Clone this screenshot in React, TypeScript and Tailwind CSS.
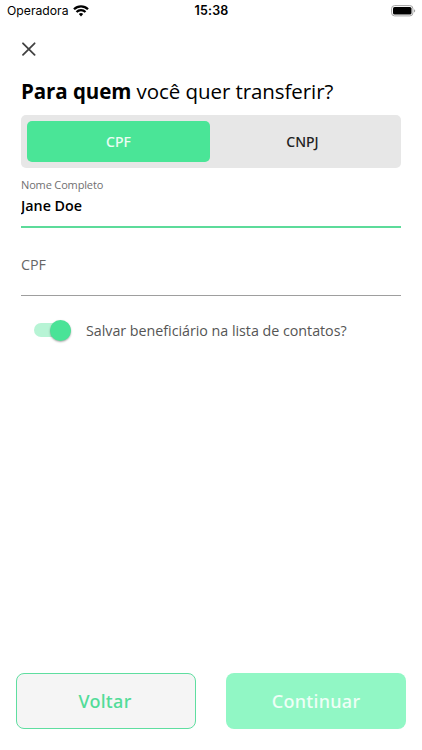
import React, { useState } from "react";

const WifiIcon = () => (
  <svg width="16" height="12" viewBox="0 0 16 12" fill="none" stroke="#000" strokeWidth="2.3">
    <path d="M1 4.3a10 10 0 0 1 14 0" />
    <path d="M3.5 7a6.4 6.4 0 0 1 9 0" />
    <path d="M8 11.4 5.8 9.1a3.1 3.1 0 0 1 4.4 0Z" fill="#000" stroke="none" />
  </svg>
);

const BatteryIcon = () => (
  <svg width="25" height="12" viewBox="0 0 25 12">
    <rect x="0.6" y="0.6" width="21.3" height="10.3" rx="3" fill="#fff" stroke="#a3a3a3" strokeWidth="1" />
    <rect x="2" y="2" width="18.5" height="7.5" rx="1.6" fill="#000" />
    <path d="M23.2 4.2v3.2c.7-.3 1-.9 1-1.6s-.3-1.3-1-1.6Z" fill="#8a8a8a" />
  </svg>
);

export default function TransferForm() {

  // 'cpf' | 'cnpj'
  const [docType, setDocType] = useState("cpf");

  const [name, setName] = useState("Jane Doe");
  const [doc, setDoc] = useState("");
  const [save, setSave] = useState(true);

  const tabClass = (active: boolean) =>
    active ? "rounded-[5px] bg-[#4ae597] text-white/90" : "rounded-[5px] text-[#222222]";

  return (
    <div className="flex h-[750px] w-[422px] flex-col bg-white font-['Open_Sans','Noto_Sans',sans-serif]">

      {/* status bar */}
      <div className="grid h-[22px] grid-cols-3 items-center pl-[7px] pr-[6px] font-['Inter',sans-serif] text-black">
        <div className="flex items-center gap-[4px] text-[12.2px] leading-[22px]">
          <span>Operadora</span>
          <WifiIcon />
        </div>
        <span className="text-center text-[12.5px] font-semibold leading-[22px] tracking-[0.2px]">15:38</span>
        <div className="flex justify-end">
          <BatteryIcon />
        </div>
      </div>

      <div className="px-[21px]">
        <button aria-label="Fechar" className="mt-[20px] block h-[14px] w-[15px]">
          <svg width="15" height="14" viewBox="0 0 15 14" fill="none" stroke="#424242" strokeWidth="1.8" strokeLinecap="round">
            <path d="M2 1.3 13.6 12.8M13.6 1.3 2 12.8" />
          </svg>
        </button>

        <h1 className="mt-[21px] whitespace-nowrap text-[20.5px] leading-[28px] tracking-[-0.07px] text-black">
          <b className="font-bold">Para quem</b> você quer transferir?
        </h1>

        {/* document type */}
        <div className="mt-[10px] grid h-[53px] w-[380px] grid-cols-[183px_1fr] rounded-[5px] bg-[#e7e7e7] p-[6px] font-['Noto_Sans',sans-serif] text-[14px] font-medium">
          <button onClick={() => setDocType("cpf")} className={tabClass(docType === "cpf")}>CPF</button>
          <button onClick={() => setDocType("cnpj")} className={tabClass(docType === "cnpj")}>CNPJ</button>
        </div>

        <div className="mt-[9px] h-[51px] w-[380px] border-b-2 border-[#5cdb9a]">
          <label className="block text-[11px] leading-[16px] tracking-[-0.15px] text-[#707070]">Nome Completo</label>
          <input
            value={name}
            onChange={(e) => setName(e.target.value)}
            className="block h-[24px] w-full text-[14.3px] font-semibold text-black outline-none"
          />
        </div>

        <div className="mt-[24px] h-[44px] w-[380px] border-b border-[#9e9e9e]">
          <input
            value={doc}
            onChange={(e) => setDoc(e.target.value)}
            placeholder="CPF"
            className="block h-[25px] w-full text-[14.3px] text-black outline-none placeholder:text-[#666666]"
          />
        </div>

        <div className="mt-[22px] flex items-center pl-[13px]">
          <button
            role="switch"
            aria-checked={save}
            onClick={() => setSave(!save)}
            className="flex h-[14px] w-[37px] items-center justify-end rounded-full bg-[#b7f4d5]"
          >
            <span className="h-[21px] w-[21px] shrink-0 rounded-full bg-[#4ae397] shadow-[0_1px_2px_rgba(0,0,0,0.35)]" />
          </button>
          <span className="ml-[15px] whitespace-nowrap pt-px text-[14.3px] leading-[23px] tracking-[-0.03px] text-[#555555]">
            Salvar beneficiário na lista de contatos?
          </span>
        </div>
      </div>

      {/* actions */}
      <div className="mt-auto mb-[21px] flex justify-between px-[16px] font-['Noto_Sans',sans-serif] text-[18px] font-medium">
        <button className="h-[56px] w-[180px] rounded-[8px] border border-[#5fdea0] bg-[#f5f5f5] pr-[2px] tracking-[0.3px] text-[#52dc98]">
          Voltar
        </button>
        <button className="h-[56px] w-[180px] rounded-[8px] bg-[#91f7c5] tracking-[0.3px] text-white/85">
          Continuar
        </button>
      </div>

    </div>
  );
}
